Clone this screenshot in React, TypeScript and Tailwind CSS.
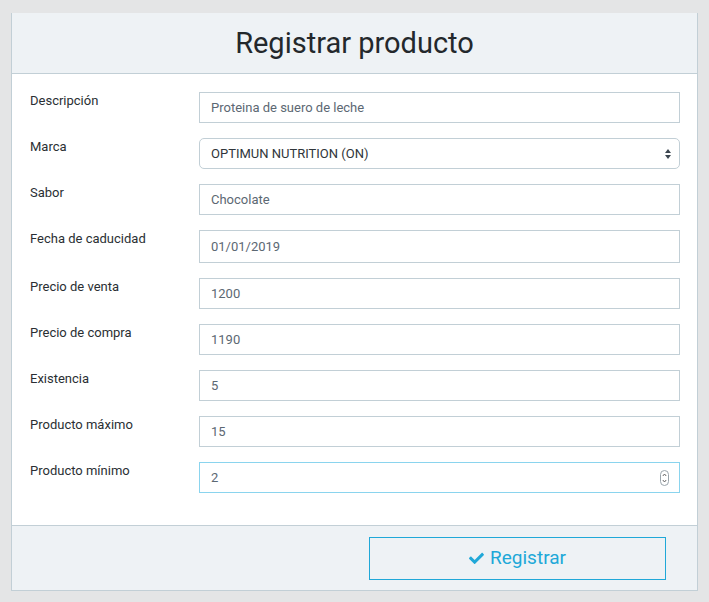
import React from 'react';

const fields: { label: string; value: string; kind?: 'select' | 'date' | 'number' }[] = [
  { label: 'Descripción', value: 'Proteina de suero de leche' },
  { label: 'Marca', value: 'OPTIMUN NUTRITION (ON)', kind: 'select' },
  { label: 'Sabor', value: 'Chocolate' },
  { label: 'Fecha de caducidad', value: '01/01/2019', kind: 'date' },
  { label: 'Precio de venta', value: '1200' },
  { label: 'Precio de compra', value: '1190' },
  { label: 'Existencia', value: '5' },
  { label: 'Producto máximo', value: '15' },
  { label: 'Producto mínimo', value: '2', kind: 'number' },
];

const SelectArrows = () => (
  <svg width="8" height="12" viewBox="0 0 8 12" className="absolute right-[8px] top-1/2 -translate-y-1/2">
    <path d="M4 1 L7 5 L1 5 Z" fill="#3c4650" />
    <path d="M4 11 L7 7 L1 7 Z" fill="#3c4650" />
  </svg>
);

const Spinner = () => (
  <svg width="9" height="16" viewBox="0 0 9 16" className="absolute right-[11px] top-1/2 -translate-y-1/2">
    <rect x="0.5" y="0.5" width="8" height="15" rx="4" fill="#fff" stroke="#9aa4ab" />
    <path d="M2.8 6 L4.5 4 L6.2 6" fill="none" stroke="#555" strokeWidth="0.9" />
    <path d="M2.8 10 L4.5 12 L6.2 10" fill="none" stroke="#555" strokeWidth="0.9" />
  </svg>
);

const Field = ({ label, value, kind }: { label: string; value: string; kind?: string }) => {
  const base = 'w-full bg-white border px-[11px] text-[13px] outline-none';
  let cls = `${base} h-[31px] border-[#c2cfd6] text-[#5c6873]`;
  if (kind === 'select') cls = `${base} h-[31px] border-[#c2cfd6] rounded-[5px] px-[7px] text-[#2f353a]`;
  if (kind === 'date') cls = `${base} h-[33px] border-[#c2cfd6] text-[#5c6873]`;
  if (kind === 'number') cls = `${base} h-[31px] border-[#8ad4ee] text-[#5c6873]`;

  return (
    <div className="flex mb-[15px]">
      <label className="w-[169px] shrink-0 pt-[1px] text-[13px] leading-[16px] text-[#2a2f33]">{label}</label>
      <div className="relative flex-1">
        <input readOnly value={value} className={cls} />
        {kind === 'select' && <SelectArrows />}
        {kind === 'number' && <Spinner />}
      </div>
    </div>
  );
};

export default function App() {
  return (
    <div className="min-h-[602px] bg-[#e4e5e6] pt-[13px] pl-[11px] pr-[11px]" style={{ fontFamily: 'Roboto, "Liberation Sans", sans-serif' }}>
      <div className="w-[687px] border border-t-0 border-[#c2cfd6] bg-white">
        <div className="h-[61px] bg-[#eef2f5] border-b border-[#c2cfd6] flex items-center justify-center">
          <h1 className="text-[29px] text-[#23282c] leading-none pt-[1px]">Registrar producto</h1>
        </div>
        <div className="pt-[18px] pb-[17px] pl-[18px] pr-[17px]">
          {fields.map((f) => (
            <Field key={f.label} {...f} />
          ))}
        </div>
        <div className="h-[65px] bg-[#eef2f5] border-t border-[#c2cfd6] flex items-center justify-end pr-[31px]">
          <button className="w-[297px] h-[43px] bg-[#eef2f5] shadow-[inset_0_0_0_1px_#20a8d8] text-[#20a8d8] text-[19px] flex items-center justify-center gap-[6px]">
            <svg width="15" height="12" viewBox="0 0 512 412" fill="#20a8d8">
              <path d="M173.9 403.6L7.5 237.2c-10-10-10-26.2 0-36.2l36.2-36.2c10-10 26.2-10 36.2 0L192 276.9 432.1 36.8c10-10 26.2-10 36.2 0l36.2 36.2c10 10 10 26.2 0 36.2L210.1 403.6c-10 10-26.2 10-36.2 0z" />
            </svg>
            Registrar
          </button>
        </div>
      </div>
    </div>
  );
}
